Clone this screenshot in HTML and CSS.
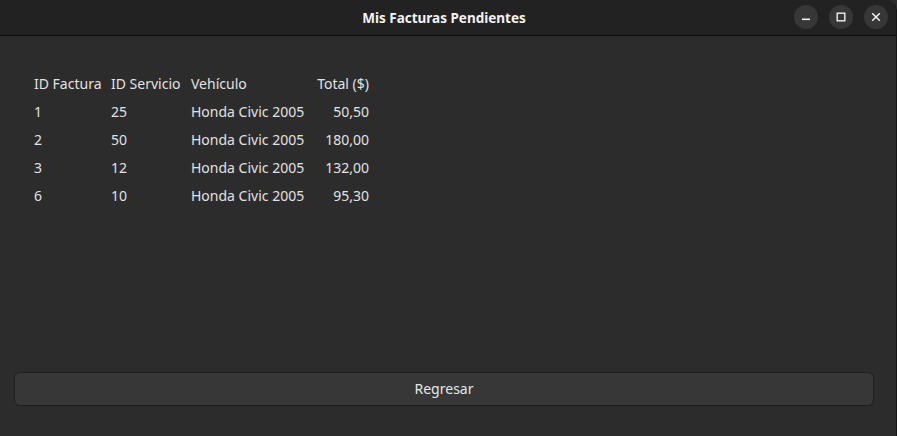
FILE: index.html
```html
<!DOCTYPE html>
<html lang="es">
<head>
<meta charset="utf-8">
<title>Mis Facturas Pendientes</title>
<link rel="stylesheet" href="styles.css">
</head>
<body>
<div class="window">
  <header class="titlebar">
    <div class="title">Mis Facturas Pendientes</div>
    <div class="controls">
      <span class="ctl"><svg width="10" height="10" viewBox="0 0 10 10"><rect x="1" y="6.5" width="8" height="1.6" fill="#f0f0f0"/></svg></span>
      <span class="ctl"><svg width="10" height="10" viewBox="0 0 10 10"><rect x="1.2" y="1.2" width="7.6" height="7.6" fill="none" stroke="#f0f0f0" stroke-width="1.4"/></svg></span>
      <span class="ctl"><svg width="10" height="10" viewBox="0 0 10 10"><path d="M1.2 1.2L8.8 8.8M8.8 1.2L1.2 8.8" stroke="#f0f0f0" stroke-width="1.5"/></svg></span>
    </div>
  </header>
  <main class="content">
    <table class="grid">
      <colgroup><col class="w1"><col class="w2"><col class="w3"><col class="w4"></colgroup>
      <thead>
        <tr><th>ID Factura</th><th>ID Servicio</th><th>Vehículo</th><th class="num">Total ($)</th></tr>
      </thead>
      <tbody>
        <tr><td>1</td><td>25</td><td>Honda Civic 2005</td><td class="num">50,50</td></tr>
        <tr><td>2</td><td>50</td><td>Honda Civic 2005</td><td class="num">180,00</td></tr>
        <tr><td>3</td><td>12</td><td>Honda Civic 2005</td><td class="num">132,00</td></tr>
        <tr><td>6</td><td>10</td><td>Honda Civic 2005</td><td class="num">95,30</td></tr>
      </tbody>
    </table>
    <div class="spacer"></div>
    <button class="btn">Regresar</button>
  </main>
</div>
</body>
</html>
```
FILE: styles.css
```css
html, body {
  margin: 0;
  padding: 0;
  background: #2c2c2c;
}
body {
  width: 897px;
  height: 436px;
  overflow: hidden;
  font-family: "Noto Sans", "DejaVu Sans", sans-serif;
  color: #e2e2e2;
}
.window {
  width: 896px;
  height: 436px;
  display: flex;
  flex-direction: column;
  background: #2c2c2c;
  border-right: 1px solid #151515;
  border-top-right-radius: 12px;
  overflow: hidden;
}
.titlebar {
  height: 35px;
  flex: none;
  background: #222222;
  border-bottom: 1px solid #0c0c0c;
  display: flex;
  align-items: center;
  justify-content: center;
  position: relative;
}
.title {
  font-weight: bold;
  font-size: 13.5px;
  color: #f2f2f2;
  margin-right: 8px;
}
.controls {
  position: absolute;
  right: 8px;
  top: 5px;
  display: flex;
  gap: 11px;
}
.ctl {
  width: 24px;
  height: 24px;
  border-radius: 50%;
  background: #373737;
  display: flex;
  align-items: center;
  justify-content: center;
}
.content {
  flex: 1;
  display: flex;
  flex-direction: column;
  padding: 33px 22px 30px 14px;
}
.grid {
  align-self: flex-start;
  border-collapse: collapse;
  table-layout: fixed;
  width: 335px;
  font-size: 14px;
  margin-left: 20px;
}
.w1 { width: 77px; }
.w2 { width: 80px; }
.w3 { width: 123px; }
.w4 { width: 55px; }
.grid th, .grid td {
  font-weight: normal;
  text-align: left;
  padding: 0;
  height: 28px;
  vertical-align: middle;
  white-space: nowrap;
}
.grid .num {
  text-align: right;
}
.spacer { flex: 1; }
.btn {
  height: 34px;
  width: 860px;
  background: #373737;
  border: 1px solid #1e1e1e;
  border-radius: 6px;
  color: #e6e6e6;
  font-family: inherit;
  font-size: 14px;
  padding: 0 0 1px 0;
}
```
